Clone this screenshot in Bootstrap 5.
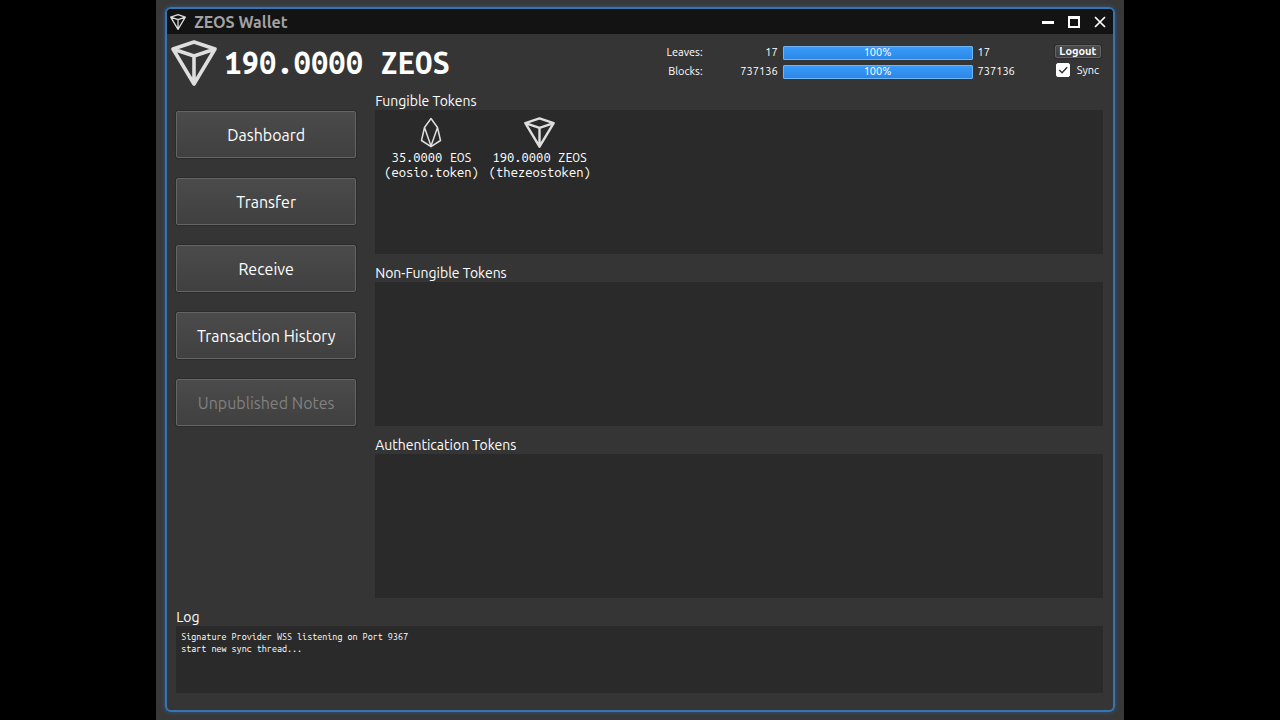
<!DOCTYPE html>
<html lang="en" data-bs-theme="dark">
<head>
<meta charset="utf-8">
<meta name="viewport" content="width=device-width, initial-scale=1">
<title>ZEOS Wallet</title>
<link href="https://cdn.jsdelivr.net/npm/bootstrap@5.3.0/dist/css/bootstrap.min.css" rel="stylesheet">
<style>
body { background: #000; color: #fff; font-family: Ubuntu, "Noto Sans", sans-serif; font-size: 14px; line-height: 18px; }
.mono { font-family: "Ubuntu Mono", "DejaVu Sans Mono", monospace; }
.desktop { width: 75.6%; background: #383838; padding: 7px 9px 8px; }
.app-window { background: #353535; border: 2px solid #3874b0; border-radius: 6px; box-shadow: 0 0 5px #2c5a8a; overflow: hidden; }
.titlebar { background: #131313; height: 25px; padding: 0 6px 0 3px; }
.titlebar h1 { font-size: 16px; line-height: 24px; font-weight: 700; color: #a2a2a2; }
.win-btn { width: 14px; height: 14px; color: #fff; background: none; border: 0; }
.header { padding: 6px 12px 0 4px; height: 52px; }
.balance { font-size: 31px; line-height: 46px; margin-left: 3px; }
.status { font-size: 11px; line-height: 19px; margin: 3px 40px 0 0; }
.status td { padding: 0; }
.status .name { width: 36px; text-align: right; }
.status .now { width: 75px; text-align: right; }
.status .bar { width: 200px; padding: 0 5px; }
.status .progress { height: 14px; border: 1px solid #6fb4f5; border-radius: 1px; background: #2a2a2a; font-size: 11px; }
.status .progress-bar { background: linear-gradient(#3a9bfa, #2b87e6); }
.qt-btn { color: #fff; border: 1px solid #656565; border-radius: 2px; background: linear-gradient(#4b4b4b, #404040); box-shadow: 0 0 0 1px #2b2b2b; }
.qt-btn:hover { color: #fff; background: #505050; }
.qt-btn:disabled { color: #808080; }
.session { padding-top: 5px; gap: 3px; }
.logout { font-size: 11px; line-height: 11px; height: 13px; width: 46px; padding: 0; font-weight: 700; }
.sync { font-size: 11px; gap: 7px; padding-left: 1px; }
.sync .form-check-input { width: 14px; height: 14px; margin: 0; border-radius: 2px; background-color: #fff; border-color: #fff; }
.sync .form-check-input:checked { background-image: url("data:image/svg+xml,%3Csvg xmlns='http://www.w3.org/2000/svg' viewBox='0 0 13 13'%3E%3Cpath d='M2.500 6.500l3 3L11 3.500' fill='none' stroke='%23333' stroke-width='1.6'/%3E%3C/svg%3E"); }
.side { width: 180px; padding-top: 25px; gap: 20px; }
.side .qt-btn { height: 47px; font-size: 16px; padding: 0; }
.main { padding: 0 10px 17px 9px; }
.body-row { gap: 19px; }
.caption { font-size: 14px; line-height: 17px; font-weight: 400; height: 28px; padding-top: 11px; margin: 0; }
.caption.first { height: 24px; padding-top: 7px; }
.well { background: #2a2a2a; }
.token-well { min-height: 90px; flex: 1 1 0; padding: 7px 9px; }
.token { font-size: 13px; line-height: 15px; text-align: center; margin-right: 10px; }
.token svg { display: block; margin: 0 auto 2px; }
.log-box { height: 67px; padding: 5px; font-size: 9px; line-height: 12px; color: #fff; border: 0; resize: none; }
</style>
</head>
<body>
<svg class="d-none" xmlns="http://www.w3.org/2000/svg">
  <symbol id="zeos" viewBox="0 0 46 46"><path d="M2 9L23 2L44 9L23 44ZM2 9L23 16L44 9M23 16V43" fill="none" stroke="#dedede" stroke-width="3.6" stroke-linejoin="round"/></symbol>
  <symbol id="eos" viewBox="0 0 22 30"><path d="M11 1L4.500 10L1.500 23L11 29.200L20.500 23L17.500 10ZM4.500 10L11 28.500L17.500 10" fill="none" stroke="#dedede" stroke-width="1.5" stroke-linejoin="round"/></symbol>
</svg>
<div class="desktop mx-auto min-vh-100 d-flex flex-column">
  <div class="app-window flex-grow-1 d-flex flex-column">
    <header class="titlebar d-flex align-items-center">
      <svg width="16" height="16" class="me-2"><use href="#zeos"/></svg>
      <h1 class="m-0 me-auto">ZEOS Wallet</h1>
      <div class="d-flex align-items-center gap-2">
        <button class="win-btn p-0 d-flex me-1" aria-label="Minimize"><svg width="14" height="14"><path d="M1 7.500H13" stroke="#fff" stroke-width="3"/></svg></button>
        <button class="win-btn p-0 d-flex me-1" aria-label="Maximize"><svg width="14" height="14"><path d="M2 2.500H12V12H2Z" fill="none" stroke="#fff" stroke-width="2"/><path d="M1 2.500H13" stroke="#fff" stroke-width="3"/></svg></button>
        <button class="win-btn p-0 d-flex" aria-label="Close"><svg width="14" height="14"><path d="M2 2L12 12M12 2L2 12" stroke="#fff" stroke-width="1.7"/></svg></button>
      </div>
    </header>
    <div class="header d-flex align-items-start">
      <svg width="46" height="46" class="me-1 flex-shrink-0"><use href="#zeos"/></svg>
      <div class="balance mono fw-bold me-auto text-nowrap">190.0000 ZEOS</div>
      <table class="status">
        <tbody>
          <tr><td class="name">Leaves:</td><td class="now">17</td><td class="bar"><div class="progress" role="progressbar" aria-label="Leaves" aria-valuenow="100" aria-valuemin="0" aria-valuemax="100"><div class="progress-bar w-100">100%</div></div></td><td>17</td></tr>
          <tr><td class="name">Blocks:</td><td class="now">737136</td><td class="bar"><div class="progress" role="progressbar" aria-label="Blocks" aria-valuenow="100" aria-valuemin="0" aria-valuemax="100"><div class="progress-bar w-100">100%</div></div></td><td>737136</td></tr>
        </tbody>
      </table>
      <div class="session d-flex flex-column">
        <button class="qt-btn logout">Logout</button>
        <div class="sync d-flex align-items-center">
          <input class="form-check-input" type="checkbox" id="sync" checked>
          <label for="sync">Sync</label>
        </div>
      </div>
    </div>
    <main class="main flex-grow-1 d-flex flex-column">
      <div class="body-row flex-grow-1 d-flex">
        <nav class="side d-flex flex-column flex-shrink-0">
          <button class="qt-btn">Dashboard</button>
          <button class="qt-btn">Transfer</button>
          <button class="qt-btn">Receive</button>
          <button class="qt-btn">Transaction History</button>
          <button class="qt-btn" disabled>Unpublished Notes</button>
        </nav>
        <div class="flex-grow-1 d-flex flex-column">
          <h2 class="caption first">Fungible Tokens</h2>
          <section class="well token-well d-flex">
            <div class="token mono"><svg width="22" height="31"><use href="#eos"/></svg>35.0000 EOS<br>(eosio.token)</div>
            <div class="token mono"><svg width="31" height="31"><use href="#zeos"/></svg>190.0000 ZEOS<br>(thezeostoken)</div>
          </section>
          <h2 class="caption">Non-Fungible Tokens</h2>
          <section class="well token-well"></section>
          <h2 class="caption">Authentication Tokens</h2>
          <section class="well token-well"></section>
        </div>
      </div>
      <label class="caption" for="log">Log</label>
      <textarea id="log" class="well log-box mono w-100 d-block" readonly>Signature Provider WSS listening on Port 9367
start new sync thread...</textarea>
    </main>
  </div>
</div>
<script src="https://cdn.jsdelivr.net/npm/bootstrap@5.3.0/dist/js/bootstrap.bundle.min.js"></script>
</body>
</html>
